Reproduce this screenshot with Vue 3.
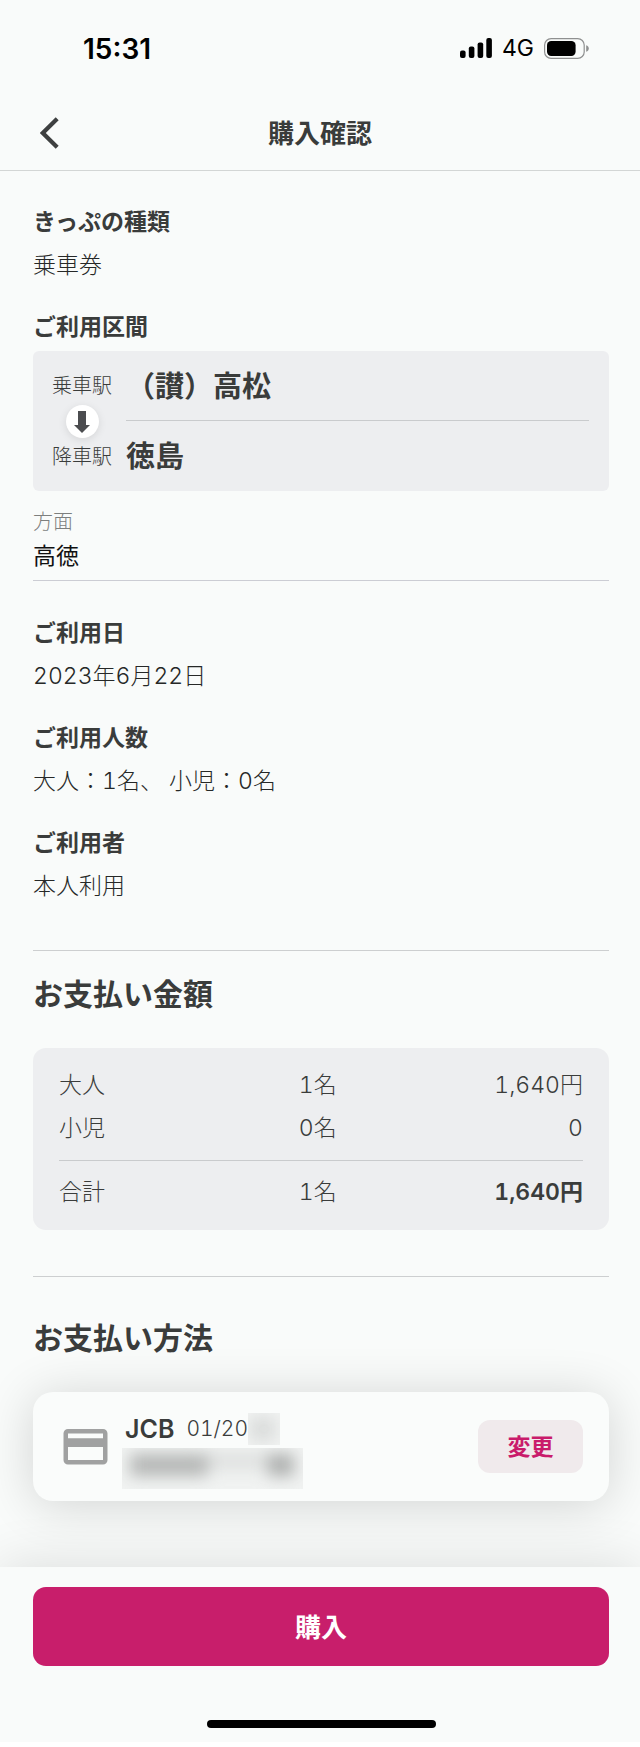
<template>
  <div class="screen">
    <!-- Status bar -->
    <div class="status-bar">
      <span class="status-time">15:31</span>
      <div class="status-right">
        <svg class="signal" width="32" height="20" viewBox="0 0 32 20" aria-hidden="true">
          <rect x="0" y="12.5" width="5.6" height="7.5" rx="2" />
          <rect x="8.8" y="8.5" width="5.6" height="11.5" rx="2" />
          <rect x="17.6" y="4.5" width="5.6" height="15.5" rx="2" />
          <rect x="26.3" y="0" width="5.6" height="20" rx="2" />
        </svg>
        <span class="status-network">4G</span>
        <svg width="45" height="21" viewBox="0 0 45 21" aria-hidden="true">
          <rect x="0.6" y="0.6" width="39.6" height="19.8" rx="6.5" fill="none" stroke="#8f9090" stroke-width="1.2" />
          <rect x="3" y="3" width="28.6" height="15" rx="4.2" fill="#000" />
          <path d="M42.2 7.2c1.7.6 2.6 1.8 2.6 3.3s-.9 2.7-2.6 3.3z" fill="#8f9090" />
        </svg>
      </div>
    </div>

    <!-- Navigation -->
    <header class="nav-bar">
      <button type="button" class="nav-back" aria-label="戻る">
        <svg width="20" height="32" viewBox="0 0 20 32" aria-hidden="true">
          <path d="M17.2 1.8 2.8 16l14.4 14.2" fill="none" stroke="#3e4040" stroke-width="4.2" />
        </svg>
      </button>
      <h1 class="nav-title">購入確認</h1>
    </header>

    <main class="content">
      <section class="field">
        <h2 class="field-label">きっぷの種類</h2>
        <p class="field-value">乗車券</p>
      </section>

      <section class="field field-route">
        <h2 class="field-label">ご利用区間</h2>
        <div class="route">
          <div class="route-side">
            <span class="route-label">乗車駅</span>
            <span class="route-arrow">
              <svg width="16" height="22" viewBox="0 0 16 22" aria-hidden="true">
                <path d="M4 0h8v14h4l-8 8-8-8h4z" fill="#4b4c4f" />
              </svg>
            </span>
            <span class="route-label">降車駅</span>
          </div>
          <div class="route-names">
            <div class="route-name">（讃）高松</div>
            <div class="route-name">徳島</div>
          </div>
        </div>
        <div class="direction">
          <p class="direction-label">方面</p>
          <p class="direction-value">高徳</p>
        </div>
      </section>

      <section v-for="item in details" :key="item.label" class="field">
        <h2 class="field-label">{{ item.label }}</h2>
        <p class="field-value">{{ item.value }}</p>
      </section>

      <section class="block block-amount">
        <h2 class="block-title">お支払い金額</h2>
        <div class="amount-box">
          <table class="amount-table">
            <tbody>
              <tr v-for="row in fares" :key="row.type">
                <th scope="row">{{ row.type }}</th>
                <td>{{ row.count }}</td>
                <td>{{ row.price }}</td>
              </tr>
            </tbody>
            <tfoot>
              <tr>
                <th scope="row">合計</th>
                <td>1名</td>
                <td class="amount-total">1,640円</td>
              </tr>
            </tfoot>
          </table>
        </div>
      </section>

      <section class="block block-method">
        <h2 class="block-title">お支払い方法</h2>
        <div class="card">
          <svg class="card-icon" width="46" height="36" viewBox="0 0 46 36" aria-hidden="true">
            <path
              fill="#a0a1a1"
              fill-rule="evenodd"
              d="M5 0h35a4.500 4.500 0 0 1 4.500 4.500v26.500a4.500 4.500 0 0 1-4.500 4.500H5A4.500 4.500 0 0 1 .5 31V4.500A4.500 4.500 0 0 1 5 0zM5 4.500v4.700h35v-4.700zM5 18v13h35V18z"
            />
          </svg>
          <div class="card-info">
            <div class="card-line">
              <span class="card-brand">JCB</span>
              <span class="card-expiry">01/20</span>
              <span class="mask mask-expiry"></span>
            </div>
            <div class="mask mask-number"></div>
          </div>
          <button type="button" class="change-button">変更</button>
        </div>
      </section>
    </main>

    <footer class="footer">
      <button type="button" class="buy-button">購入</button>
      <div class="home-indicator"></div>
    </footer>
  </div>
</template>

<script setup>
const details = [
  { label: 'ご利用日', value: '2023年6月22日' },
  { label: 'ご利用人数', value: '大人：1名、 小児：0名' },
  { label: 'ご利用者', value: '本人利用' }
]

const fares = [
  { type: '大人', count: '1名', price: '1,640円' },
  { type: '小児', count: '0名', price: '0' }
]
</script>

<style>
body {
  margin: 0;
  background-color: #ffffff;
}
</style>

<style scoped>
.screen {
  background-color: #f9fbfa;
  color: #3a3c3b;
  font-family: Inter, 'Noto Sans CJK JP', sans-serif;
  font-size: 23px;
  font-optical-sizing: none;
  font-variant-numeric: tabular-nums;
  line-height: 32px;
}

h1,
h2,
p {
  margin: 0;
}

button {
  border: none;
  padding: 0;
  font-family: inherit;
  cursor: pointer;
}

/* Status bar */
.status-bar {
  display: flex;
  align-items: center;
  justify-content: space-between;
  height: 96px;
  padding: 0 51px 0 83px;
  color: #000000;
  font-variant-numeric: normal;
}

.status-time {
  padding-top: 2px;
  font-size: 28px;
  font-weight: 600;
}

.status-right {
  display: flex;
  align-items: center;
  gap: 10px;
}

.status-network {
  font-size: 23px;
}

/* Navigation */
.nav-bar {
  display: grid;
  grid-template-columns: 60px 1fr 60px;
  align-items: center;
  height: 74px;
  border-bottom: 1px solid #d3d6d5;
}

.nav-back {
  display: flex;
  justify-content: flex-end;
  background: none;
}

.nav-title {
  padding-top: 2px;
  font-size: 26px;
  font-weight: 600;
  text-align: center;
}

/* Fields */
.content {
  padding: 35px 31px 66px 33px;
}

.field + .field {
  margin-top: 30px;
}

.field-label {
  font-size: 23px;
  font-weight: 600;
}

.field-value {
  margin-top: 11px;
  font-weight: 300;
  color: #262827;
}

.route {
  display: flex;
  gap: 14px;
  margin-top: 8px;
  padding: 0 20px 1px 19px;
  border-radius: 6px;
  background-color: #edeef0;
}

.route-side {
  display: flex;
  flex-direction: column;
  align-items: center;
  justify-content: center;
  gap: 5px;
  padding-top: 2px;
}

.route-label {
  font-size: 20px;
  font-weight: 300;
  line-height: 28px;
}

.route-arrow {
  display: flex;
  align-items: center;
  justify-content: center;
  width: 33px;
  height: 33px;
  border-radius: 50%;
  background-color: #ffffff;
  box-shadow: 0 2px 8px rgba(0, 0, 0, 0.1);
}

.route-names {
  flex: 1;
}

.route-name {
  padding-top: 3px;
  font-size: 29px;
  font-weight: 600;
  line-height: 66px;
}

.route-name + .route-name {
  border-top: 1px solid #c9cbcd;
}

.direction {
  margin-top: 17px;
  padding-bottom: 8px;
  border-bottom: 1px solid #cccdd4;
}

.direction-label {
  font-size: 20px;
  font-weight: 300;
  line-height: 28px;
  color: #7d7f7e;
}

.direction-value {
  margin-top: 4px;
  font-weight: 400;
  color: #111111;
}

.field-route + .field {
  margin-top: 36px;
}

/* Payment blocks */
.block {
  border-top: 1px solid #cdcfd0;
}

.block-title {
  margin-bottom: 34px;
  font-size: 30px;
  font-weight: 600;
  line-height: 40px;
}

.block-amount {
  margin-top: 48px;
  padding-top: 23px;
}

.block-method {
  margin-top: 46px;
  padding-top: 41px;
}

.amount-box {
  padding: 16px 26px;
  border-radius: 13px;
  background-color: #edeef0;
}

.amount-table {
  width: 100%;
  table-layout: fixed;
  border-collapse: collapse;
  font-weight: 300;
  line-height: 43px;
}

.amount-table th,
.amount-table td {
  padding: 0;
  font-weight: 300;
  text-align: right;
}

.amount-table th {
  width: 30%;
  text-align: left;
}

.amount-table th + td {
  width: 23%;
}

.amount-table tbody tr:last-child th,
.amount-table tbody tr:last-child td {
  padding-bottom: 10px;
}

.amount-table tfoot th,
.amount-table tfoot td {
  padding-top: 10px;
  border-top: 1px solid #c9cbcd;
}

.amount-table .amount-total {
  font-weight: 600;
}

/* Payment card */
.card {
  display: flex;
  align-items: center;
  height: 109px;
  padding: 0 26px 0 30px;
  border-radius: 20px;
  background-color: #fafcfb;
  box-shadow: 0 4px 50px rgba(0, 0, 0, 0.16);
}

.card-info {
  flex: 1;
  padding: 9px 0 0 13px;
}

.card-line {
  display: flex;
  align-items: center;
}

.card-brand {
  padding: 0 12px 0 3px;
  font-size: 25px;
  font-weight: 600;
}

.card-expiry {
  font-size: 21px;
  font-weight: 300;
}

.mask {
  overflow: hidden;
  background-color: #f1f3f2;
}

.mask::before {
  content: '';
  display: block;
  height: 100%;
  filter: blur(8px);
}

.mask-expiry {
  width: 32px;
  height: 32px;
}

.mask-expiry::before {
  background: radial-gradient(circle at 45% 50%, #d6d8d7 30%, #eff1f0 75%);
}

.mask-number {
  width: 181px;
  height: 41px;
  margin-top: 3px;
}

.mask-number::before {
  background:
    linear-gradient(#b4b6b5, #b4b6b5) 8px 6px / 78px 22px no-repeat,
    linear-gradient(#acaead, #acaead) 146px 6px / 26px 22px no-repeat,
    linear-gradient(#dfe1e0, #dfe1e0) 80px 4px / 72px 18px no-repeat;
}

.change-button {
  width: 105px;
  height: 53px;
  padding-bottom: 3px;
  border-radius: 12px;
  background-color: #f0eaec;
  color: #c91b6b;
  font-size: 23px;
  font-weight: 600;
}

/* Footer */
.footer {
  position: relative;
  padding: 20px 31px 14px 33px;
  background-color: #f9fbfa;
  box-shadow: 0 -2px 50px rgba(0, 0, 0, 0.12);
}

.buy-button {
  display: block;
  width: 100%;
  height: 79px;
  padding-bottom: 3px;
  border-radius: 13px;
  background-color: #c81e6b;
  color: #ffffff;
  font-size: 26px;
  font-weight: 600;
}

.home-indicator {
  width: 229px;
  height: 8px;
  margin: 54px auto 0;
  border-radius: 4px;
  background-color: #000000;
}
</style>
